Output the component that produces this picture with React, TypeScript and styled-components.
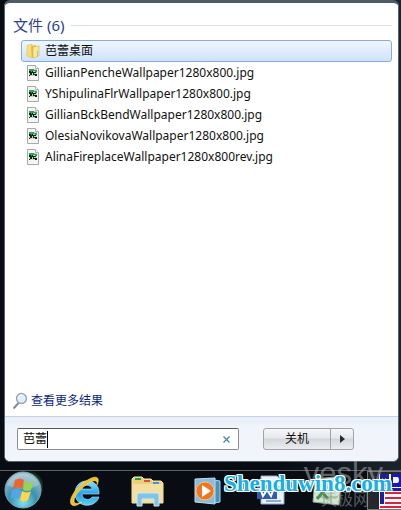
import React, { useState } from "react";
import styled, { createGlobalStyle } from "styled-components";

const ui = `"Noto Sans", "Noto Sans CJK SC", sans-serif`;

const GlobalStyle = createGlobalStyle`
  *, *::before, *::after { box-sizing: border-box; }
  body { margin: 0; background: #080d14; font: 12px/20px ${ui}; color: #111; }
  button, input { font: inherit; color: inherit; }
`;

const Desktop = styled.div`
  display: flex;
  flex-direction: column;
  height: 100vh;
  overflow: hidden;
  background: linear-gradient(90deg, #080d14 70%, #1b242c);
`;

const Menu = styled.main`
  flex: 1;
  display: flex;
  flex-direction: column;
  margin: 0 2px 8px 4px;
  border: 1px solid #59636c;
  border-top: 3px solid #4b5b68;
  border-radius: 6px;
  background: #fff;
  overflow: hidden;
`;

const Results = styled.section`
  flex: 1;
  display: flex;
  flex-direction: column;
  padding: 12px 6px 5px 8px;
`;

const GroupTitle = styled.h2`
  display: flex;
  align-items: center;
  gap: 7px;
  margin: 0 0 4px;
  font-size: 15px;
  line-height: 21px;
  font-weight: 400;
  color: #2c3f94;
  &::after { content: ""; flex: 1; height: 1px; background: #dce1e8; }
`;

const List = styled.ul`
  list-style: none;
  margin: 0 0 0 8px;
  padding: 0;
`;

const Item = styled.button<{ $selected: boolean }>`
  display: flex;
  align-items: center;
  gap: 4px;
  width: 100%;
  height: ${p => (p.$selected ? 22 : 21)}px;
  padding: 0 4px;
  border: 1px solid ${p => (p.$selected ? "#84acdd" : "transparent")};
  border-radius: 3px;
  background: ${p => (p.$selected ? "linear-gradient(#f0f6fe, #cfe2fc)" : "none")};
  text-align: left;
  white-space: nowrap;
`;

const MoreLink = styled.a`
  display: flex;
  align-items: center;
  gap: 3px;
  margin-top: auto;
  color: #0c1f87;
  text-decoration: none;
`;

const Footer = styled.footer`
  display: flex;
  gap: 24px;
  padding: 11px 12px;
  border-top: 1px solid #c5d3e6;
  background: linear-gradient(#e9eff8, #f1f5fb 12px);
`;

const SearchBox = styled.label`
  display: flex;
  align-items: center;
  flex: 0 1 222px;
  height: 22px;
  border: 1px solid #8b9097;
  border-top-color: #54595f;
  border-radius: 2px;
  background: #fff;
`;

const SearchInput = styled.input`
  field-sizing: content;
  min-width: 0;
  height: 18px;
  padding: 0 0 0 5px;
  border: 0;
  outline: 0;
  background: none;
  caret-color: transparent;
`;

const Caret = styled.span`
  width: 1px;
  height: 17px;
  background: #000;
`;

const ClearButton = styled.button`
  display: grid;
  place-items: center;
  width: 24px;
  margin-left: auto;
  padding: 0;
  border: 0;
  background: none;
`;

const SplitButton = styled.div`
  display: flex;
  height: 22px;
  border: 1px solid #a0a4aa;
  border-radius: 3px;
  background: linear-gradient(#f6f7f9, #e6e8eb 45%, #d3d6da 50%, #eceef1);
`;

const Action = styled.button<{ $width: number }>`
  display: grid;
  place-items: center;
  width: ${p => p.$width}px;
  padding: 0;
  border: 0;
  background: none;
  & + & { border-left: 1px solid #a0a4aa; }
`;

const Taskbar = styled.nav`
  position: relative;
  display: flex;
  align-items: center;
  height: 40px;
  padding-left: 3px;
  border-top: 1px solid #5d6164;
  background: #090c12;
`;

const TaskButton = styled.button<{ $width: number }>`
  display: grid;
  place-items: center;
  width: ${p => p.$width}px;
  height: 39px;
  padding: 0;
  border: 0;
  background: none;
`;

const Tray = styled.button`
  display: grid;
  place-items: end;
  width: 34px;
  height: 39px;
  margin-left: auto;
  padding: 0;
  border: 1px solid #777;
  border-right: 0;
  background: #24272c;
`;

const SiteMark = styled.div`
  position: absolute;
  right: 9px;
  top: 0;
  font: bold 23px/26px "Liberation Serif", serif;
  color: #18aee6;
  text-shadow: 1px 0 #fff, -1px 0 #fff, 0 1px #fff, 0 -1px #fff,
    1px 1px #fff, -1px -1px #fff, 1px -1px #fff, -1px 1px #fff;
  pointer-events: none;
`;

const FaintMark = styled.div`
  position: absolute;
  right: 18px;
  top: -13px;
  font: 31px/32px "Liberation Sans", sans-serif;
  color: #9a9da099;
  pointer-events: none;
`;

const FaintCaption = styled.div`
  position: absolute;
  right: 32px;
  bottom: 2px;
  font: 16px/20px "Noto Sans CJK SC", sans-serif;
  color: #a5aaa880;
  pointer-events: none;
`;

const FolderIcon = () => (
  <svg width="15" height="16" viewBox="0 0 15 16" aria-hidden="true">
    <path d="M1 2.5 6 1v14l-5-2Z" fill="#f6df7b" stroke="#e2c34f" strokeWidth=".6" />
    <path d="m5 3 5-1v11l-4 2Z" fill="#e5bd45" />
    <path d="m7 4 6-1v10l-6 2Z" fill="#f8e896" stroke="#d9b643" strokeWidth=".6" />
    <path d="M11 8h1v5h-1z" fill="#9fc3df" />
  </svg>
);

const ImageIcon = () => (
  <svg width="15" height="16" viewBox="0 0 15 16" aria-hidden="true">
    <path d="M1.5.5h8l3 3v12h-11z" fill="#f4f5f4" stroke="#a5aaa5" />
    <path d="M9.500 .5v3h3" fill="#fff" stroke="#b9adc0" />
    <path d="M3 4h8v7H3z" fill="#bcd8c4" />
    <path d="M3 4h5v1h3v2H9V6H7v1H5V6H3z" fill="#2aa64e" />
    <path d="M3 6h2v1h1V6h1v1h3v1H8v1h3v2H9v-1H7V8H6v2H4v1H3v-1h1V8H3z" fill="#16241a" />
  </svg>
);

const SearchIcon = () => (
  <svg width="15" height="18" viewBox="0 0 15 18" aria-hidden="true">
    <path d="m5.500 11-5 5.500" stroke="#858a90" strokeWidth="2" />
    <circle cx="8.500" cy="6.500" r="5" fill="#dceffa" stroke="#98a2ae" strokeWidth="1.300" />
    <path d="M5.500 6a3.500 3.500 0 0 1 4-3" stroke="#fff" fill="none" />
  </svg>
);

const StartIcon = () => (
  <svg width="40" height="39" viewBox="0 0 40 39" aria-hidden="true">
    <defs>
      <radialGradient id="orb" cx=".5" cy=".85" r=".85">
        <stop offset="0" stopColor="#7fe3f2" />
        <stop offset=".45" stopColor="#3a90b0" />
        <stop offset="1" stopColor="#a9c4cf" />
      </radialGradient>
      <radialGradient id="glow">
        <stop offset=".6" stopColor="#3d9a3e" />
        <stop offset="1" stopColor="#3d9a3e" stopOpacity="0" />
      </radialGradient>
    </defs>
    <ellipse cx="27" cy="15" rx="14" ry="15" fill="url(#glow)" opacity=".7" />
    <circle cx="20" cy="19" r="18" fill="url(#orb)" stroke="#79a6b4" />
    <path d="M4 14a17 17 0 0 1 32 0q-15 8-32 0Z" fill="#fff" opacity=".23" />
    <path d="M12 9q5-3 9 0l-2 9q-5-3-9 0Z" fill="#f0642b" />
    <path d="M22 10q5 3 9 0l-3 9q-4 2-8 0Z" fill="#9bd447" />
    <path d="M9 19q5-3 9 0l-2 9q-4-3-9 0Z" fill="#52a6e5" />
    <path d="M19 20q5 3 9 0l-3 9q-4 3-8 0Z" fill="#ffd64b" />
  </svg>
);

const BrowserIcon = () => (
  <svg width="34" height="34" viewBox="0 0 34 34" aria-hidden="true">
    <defs>
      <linearGradient id="ie" x2="0" y2="1">
        <stop stopColor="#8cdcfb" />
        <stop offset=".55" stopColor="#1fa3e8" />
        <stop offset="1" stopColor="#65ccf5" />
      </linearGradient>
    </defs>
    <path fillRule="evenodd" d="M31 20H14c0 6 8 7 10 3h7c-4 12-23 11-24-3C6 3 32 2 31 20ZM14 15h10c-1-5-9-5-10 0Z" fill="url(#ie)" stroke="#b9e9fa" strokeWidth=".6" />
    <path d="M29 11C33 2 27 1 18 7 7 14-1 27 4 31c3 2 7-1 10-3-5 2-8 2-8-1 0-5 6-12 13-17 6-4 11-5 10 1Z" fill="#f4bf26" stroke="#ffe27a" strokeWidth=".6" />
  </svg>
);

const ExplorerIcon = () => (
  <svg width="34" height="32" viewBox="0 0 34 32" aria-hidden="true">
    <path d="M2 4 4 2h8l2 2h7l2 2h8l2 2v20H2Z" fill="#edcf78" stroke="#f9e8aa" />
    <path d="M5 3h6v2H5z" fill="#31934e" />
    <path d="M14 5h6v2h-6z" fill="#d4573d" />
    <path d="M23 7h6v2h-6z" fill="#369bd4" />
    <path d="M3 9h29v18H3z" fill="#f3dfa0" />
    <path d="M7 31V20q0-2 2-2h18q2 0 2 2v11h-5v-7H12v7Z" fill="#82c4e7" stroke="#c4e9f7" />
  </svg>
);

const PlayerIcon = () => (
  <svg width="28" height="28" viewBox="0 0 28 28" aria-hidden="true">
    <path d="m20 3 6 1v21l-6 1z" fill="#4991bd" stroke="#a6d8ec" />
    <path d="m1 2 20-1v26L1 25Z" fill="#89bddb" stroke="#b9e1f2" />
    <circle cx="11" cy="14" r="9" fill="#ef761e" stroke="#ffc07e" />
    <path d="m8 8 9 6-9 6Z" fill="#fff" />
  </svg>
);

const WordIcon = () => (
  <svg width="29" height="32" viewBox="0 0 29 32" aria-hidden="true">
    <path d="M5 1h16l7 7v21H5z" fill="#e8f0f9" stroke="#91a7ca" />
    <path d="M10 12h15M10 16h15M10 26h15" stroke="#8eaadd" strokeWidth="2" />
    <path d="M1 10h20v14H1z" fill="#315ca9" />
    <path d="m4 13 3 8 4-6 4 6 3-8" fill="none" stroke="#fff" strokeWidth="2" />
  </svg>
);

const TableIcon = () => (
  <svg width="31" height="32" viewBox="0 0 31 32" aria-hidden="true">
    <path d="m3 4 20-2 6 5-2 23-26-3Z" fill="#d4e4d0" stroke="#8dab8b" />
    <path d="M5 10h21M4 16h22M4 22h22M12 5v23M19 5v23" stroke="#7fa683" />
    <path d="m5 11 11 13m0-13L5 24" stroke="#4d8d58" strokeWidth="3" />
  </svg>
);

const FlagIcon = () => (
  <svg width="22" height="35" viewBox="0 0 22 35" aria-hidden="true">
    <path d="M0 0h22v35H0z" fill="#f8f8ff" />
    <path d="M1 0h9v14h12v3H5v13H1z" fill="#1c20a0" />
    <path d="M12 0h10v13H12z" fill="#1718ba" />
    <path d="M14 3h4q2 0 2 3t-2 3h-4z" fill="#f4f5ff" />
    <path d="M6 19h16M6 24h16M6 29h16M1 33h21" stroke="#dc2338" strokeWidth="2" />
    <path d="M3 5h5M3 9h5M3 13h5" stroke="#dfe4ff" strokeDasharray="1 2" />
  </svg>
);

const files = [
  "芭蕾桌面",
  "GillianPencheWallpaper1280x800.jpg",
  "YShipulinaFlrWallpaper1280x800.jpg",
  "GillianBckBendWallpaper1280x800.jpg",
  "OlesiaNovikovaWallpaper1280x800.jpg",
  "AlinaFireplaceWallpaper1280x800rev.jpg",
];

const tasks = [
  { label: "Internet Explorer", width: 84, icon: <BrowserIcon /> },
  { label: "Windows Explorer", width: 40, icon: <ExplorerIcon /> },
  { label: "Media Player", width: 82, icon: <PlayerIcon /> },
  { label: "Word", width: 42, icon: <WordIcon /> },
  { label: "Excel", width: 73, icon: <TableIcon /> },
];

export default function App() {
  const [query, setQuery] = useState("芭蕾");
  return (
    <Desktop>
      <GlobalStyle />
      <Menu>
        <Results>
          <GroupTitle>文件 (6)</GroupTitle>
          <List>
            {files.map((name, index) => (
              <li key={name}>
                <Item $selected={index === 0}>
                  {index === 0 ? <FolderIcon /> : <ImageIcon />}
                  {name}
                </Item>
              </li>
            ))}
          </List>
          <MoreLink href="#results"><SearchIcon />查看更多结果</MoreLink>
        </Results>
        <Footer>
          <SearchBox>
            <SearchInput
              autoFocus
              aria-label="搜索"
              value={query}
              onChange={event => setQuery(event.target.value)}
            />
            <Caret />
            <ClearButton aria-label="清除" onClick={() => setQuery("")}>
              <svg width="7" height="7" viewBox="0 0 7 7" aria-hidden="true">
                <path d="m.5.5 6 6m0-6-6 6" stroke="#4387b7" strokeWidth="1.300" />
              </svg>
            </ClearButton>
          </SearchBox>
          <SplitButton>
            <Action $width={66}>关机</Action>
            <Action $width={23} aria-label="关机选项">
              <svg width="5" height="8" viewBox="0 0 5 8" aria-hidden="true"><path d="m0 0 5 4-5 4Z" fill="#252a30" /></svg>
            </Action>
          </SplitButton>
        </Footer>
      </Menu>
      <Taskbar>
        <TaskButton $width={40} aria-label="开始"><StartIcon /></TaskButton>
        {tasks.map(task => (
          <TaskButton key={task.label} $width={task.width} aria-label={task.label}>{task.icon}</TaskButton>
        ))}
        <Tray aria-label="输入语言"><FlagIcon /></Tray>
        <FaintMark>yesky</FaintMark>
        <FaintCaption>天极网</FaintCaption>
        <SiteMark>Shenduwin8.com</SiteMark>
      </Taskbar>
    </Desktop>
  );
}
